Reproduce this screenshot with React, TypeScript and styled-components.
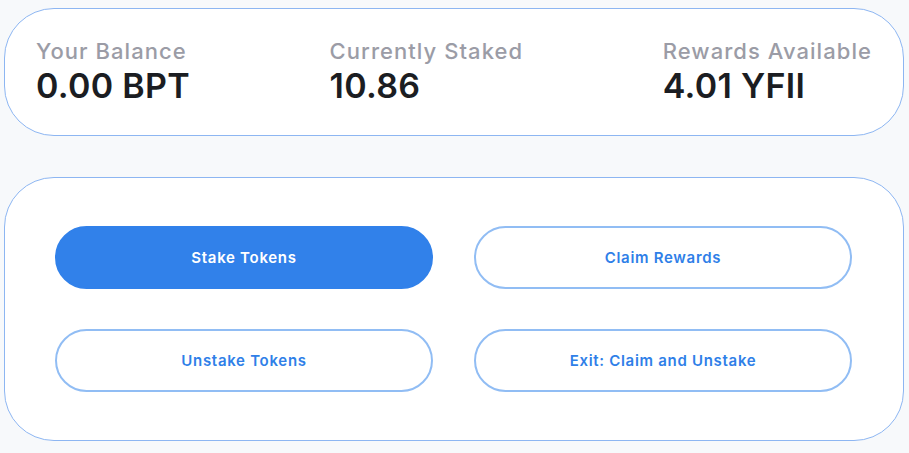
import React from "react";
import styled, { createGlobalStyle } from "styled-components";

const Global = createGlobalStyle`
  html, body { margin: 0; padding: 0; background: #f7f9fb; }
  body { font-family: "Inter", "Open Sans", sans-serif; }
  * { box-sizing: border-box; }
`;

const Page = styled.div`
  display: flex;
  flex-direction: column;
  gap: 41px;
  padding: 8px 5px 12px 4px;
`;

const Card = styled.div`
  background: #ffffff;
  border: 1px solid #8db6f2;
  border-radius: 50px;
`;

const StatsCard = styled(Card)`
  height: 128px;
  display: flex;
  justify-content: space-between;
  padding: 29px 31px 0 31px;
`;

const Stat = styled.div`
  display: flex;
  flex-direction: column;
`;

const Label = styled.div`
  font-size: 22px;
  line-height: 26px;
  font-weight: 500;
  color: #9b9ca6;
  letter-spacing: 1.05px;
`;

const Value = styled.div`
  font-size: 34px;
  line-height: 44px;
  font-weight: 600;
  color: #1b1d22;
  letter-spacing: 0.3px;
`;

const ActionsCard = styled(Card)`
  height: 264px;
  display: grid;
  grid-template-columns: 1fr 1fr;
  column-gap: 41px;
  row-gap: 40px;
  padding: 48px 51px 48px 50px;
`;

const ActionButton = styled.button<{ $primary?: boolean }>`
  height: 63px;
  border-radius: 32px;
  font-family: "Inter", "Open Sans", sans-serif;
  font-size: 15px;
  font-weight: 600;
  letter-spacing: 0.7px;
  cursor: pointer;
  border: 2px solid ${(p) => (p.$primary ? "#3181ea" : "#91bdf4")};
  background: ${(p) => (p.$primary ? "#3181ea" : "#ffffff")};
  color: ${(p) => (p.$primary ? "#ffffff" : "#2f7fe8")};
`;

const stats = [
  { label: "Your Balance", value: "0.00 BPT" },
  { label: "Currently Staked", value: "10.86" },
  { label: "Rewards Available", value: "4.01 YFII" },
];

export default function App() {
  return (
    <>
      <Global />
      <Page>
        <StatsCard>
          {stats.map((s) => (
            <Stat key={s.label}>
              <Label>{s.label}</Label>
              <Value>{s.value}</Value>
            </Stat>
          ))}
        </StatsCard>
        <ActionsCard>
          <ActionButton $primary>Stake Tokens</ActionButton>
          <ActionButton>Claim Rewards</ActionButton>
          <ActionButton>Unstake Tokens</ActionButton>
          <ActionButton>Exit: Claim and Unstake</ActionButton>
        </ActionsCard>
      </Page>
    </>
  );
}
